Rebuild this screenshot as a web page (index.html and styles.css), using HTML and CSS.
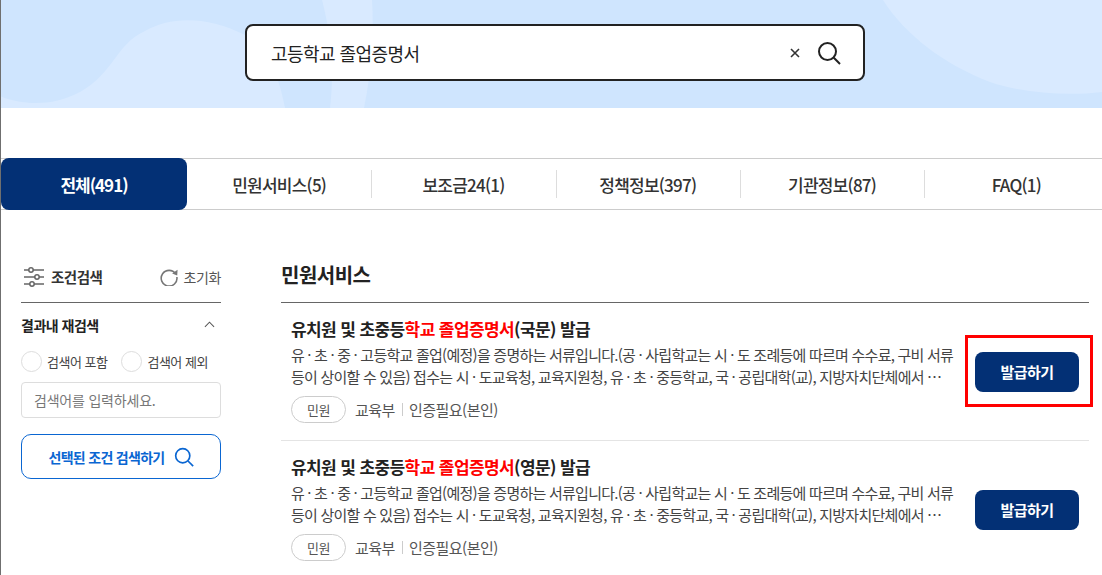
FILE: index.html
```html
<!DOCTYPE html>
<html lang="ko">
<head>
<meta charset="utf-8">
<title>검색</title>
<link rel="stylesheet" href="styles.css">
</head>
<body>
<div class="page">
  <header class="hero">
    <svg class="hero-bg" viewBox="0 0 1102 108" preserveAspectRatio="none" aria-hidden="true">
      <path class="blob" d="M0 96C20 104 50 108 80 92C115 72 115 45 145 31C170 17 205 15 245 35C265 47 278 70 285 108H0Z"/>
      <path class="blob" d="M322 0C330 30 335 70 330 108H364C372 70 374 30 372 0Z"/>
      <path class="blob" d="M883 0C905 35 945 65 990 82C1025 94 1070 96 1102 92V0Z"/>
    </svg>
    <div class="search">
      <span class="query">고등학교 졸업증명서</span>
      <svg class="clear" viewBox="0 0 10 10" aria-hidden="true"><path d="M1 1 9 9M9 1 1 9"/></svg>
      <svg class="glass" viewBox="0 0 24 24" aria-hidden="true"><circle cx="10.5" cy="10.5" r="8.5"/><path d="M16.8 16.8 23 23"/></svg>
    </div>
  </header>

  <nav class="tabs">
    <a class="tab active">전체(491)</a>
    <a class="tab">민원서비스(5)</a>
    <a class="tab">보조금24(1)</a>
    <a class="tab">정책정보(397)</a>
    <a class="tab">기관정보(87)</a>
    <a class="tab">FAQ(1)</a>
  </nav>

  <div class="content">
    <aside class="side">
      <div class="side-head">
        <svg class="sliders" viewBox="0 0 20 20" aria-hidden="true">
          <path d="M0 3H20M0 10H20M0 17H20"/>
          <circle cx="7" cy="3" r="2.2"/><circle cx="13" cy="10" r="2.2"/><circle cx="8" cy="17" r="2.2"/>
        </svg>
        <strong class="side-title">조건검색</strong>
        <span class="reset">
          <svg viewBox="0 0 16 16" aria-hidden="true"><path d="M13.9 5.2A7 7 0 1 0 15 8"/><path class="fill" d="M15.6 1.6 15.3 6.6 10.8 4.8Z"/></svg>
          초기화
        </span>
      </div>
      <div class="refine-head">
        <strong>결과내 재검색</strong>
        <svg viewBox="0 0 12 7" aria-hidden="true"><path d="M1 6 6 1 11 6"/></svg>
      </div>
      <div class="radios">
        <label class="radio"><i></i>검색어 포함</label>
        <label class="radio"><i></i>검색어 제외</label>
      </div>
      <div class="field">검색어를 입력하세요.</div>
      <button class="apply">선택된 조건 검색하기
        <svg viewBox="0 0 24 24" aria-hidden="true"><circle cx="10.5" cy="10.5" r="8.5"/><path d="M16.8 16.8 23 23"/></svg>
      </button>
    </aside>

    <main class="main">
      <h2 class="section-title">민원서비스</h2>
      <ul class="list">
        <li class="item">
          <div class="body">
            <h3 class="item-title">유치원 및 초중등<em>학교 졸업증명서</em>(국문) 발급</h3>
            <p class="desc">유 · 초 · 중 · 고등학교 졸업(예정)을 증명하는 서류입니다.(공 · 사립학교는 시 · 도 조례등에 따르며 수수료, 구비 서류<br>등이 상이할 수 있음) 접수는 시 · 도교육청, 교육지원청, 유 · 초 · 중등학교, 국 · 공립대학(교), 지방자치단체에서 …</p>
            <div class="meta"><span class="pill">민원</span><span class="org">교육부</span><span class="auth">인증필요(본인)</span></div>
          </div>
          <div class="action marked"><a class="issue">발급하기</a></div>
        </li>
        <li class="item">
          <div class="body">
            <h3 class="item-title">유치원 및 초중등<em>학교 졸업증명서</em>(영문) 발급</h3>
            <p class="desc">유 · 초 · 중 · 고등학교 졸업(예정)을 증명하는 서류입니다.(공 · 사립학교는 시 · 도 조례등에 따르며 수수료, 구비 서류<br>등이 상이할 수 있음) 접수는 시 · 도교육청, 교육지원청, 유 · 초 · 중등학교, 국 · 공립대학(교), 지방자치단체에서 …</p>
            <div class="meta"><span class="pill">민원</span><span class="org">교육부</span><span class="auth">인증필요(본인)</span></div>
          </div>
          <div class="action"><a class="issue">발급하기</a></div>
        </li>
      </ul>
    </main>
  </div>
</div>
</body>
</html>
```
FILE: styles.css
```css
* { box-sizing: border-box; }
html, body { margin: 0; height: 100%; overflow: hidden; }
body { background: #fff; color: #222; font-family: "Noto Sans CJK KR", "Noto Sans", sans-serif; letter-spacing: -0.5px; }
.page { border-left: 1px solid #6f6f6f; height: 575px; overflow: hidden; }

.hero { position: relative; height: 108px; background: #cfe5fe; display: flex; padding: 24px 0 0 244px; }
.hero-bg { position: absolute; inset: 0 0 0 -1px; width: 1102px; height: 108px; }
.blob { fill: #d9eaff; }
.search { position: relative; width: 620px; height: 57px; flex: none; background: #fff; border: 2px solid #222; border-radius: 8px; display: flex; align-items: center; padding: 0 22px 0 24px; }
.query { flex: 1; font-size: 18px; color: #222; letter-spacing: -0.55px; }
.clear { width: 10px; height: 10px; margin-right: 17px; fill: none; stroke: #333; stroke-width: 1.6; }
.glass { width: 24px; height: 24px; fill: none; stroke: #222; stroke-width: 2; }

.tabs { display: flex; margin-top: 50px; height: 52px; border-top: 1px solid #ccc; border-bottom: 1px solid #ccc; }
.tab { position: relative; flex: none; width: 184.3px; display: flex; align-items: center; justify-content: center; font-size: 17px; font-weight: 500; color: #333; letter-spacing: -0.75px; }
.tab + .tab::before { content: ""; position: absolute; left: 0; top: 11px; height: 28px; border-left: 1px solid #ddd; }
.tab.active + .tab::before { display: none; }
.tab.active { width: 186px; margin: -1px 0; background: #033075; color: #fff; font-weight: 700; border-radius: 8px; letter-spacing: -1px; }

.content { display: flex; padding: 0 13px 0 20px; }
.side { width: 200px; flex: none; margin-top: 49px; }
.side-head { display: flex; align-items: center; height: 44px; padding-bottom: 8px; border-bottom: 1px solid #666; }
.sliders { width: 20px; height: 20px; margin-left: 3px; margin-right: 7px; fill: #fff; stroke: #666; stroke-width: 1.5; }
.side-title { font-size: 14.5px; font-weight: 700; color: #333; }
.reset { margin-left: auto; display: flex; align-items: center; gap: 5px; font-size: 14px; color: #555; letter-spacing: -0.35px; }
.reset svg { width: 18px; height: 18px; fill: none; stroke: #777; stroke-width: 1.4; }
.reset .fill { fill: #777; stroke: none; }
.refine-head { display: flex; align-items: center; justify-content: space-between; padding: 10px 6px 0 0; height: 33px; }
.refine-head strong { font-size: 14px; font-weight: 700; color: #222; }
.refine-head svg { width: 11px; height: 7px; fill: none; stroke: #555; stroke-width: 1.1; }
.radios { display: flex; gap: 14px; margin-top: 15px; }
.radio { display: flex; align-items: center; gap: 5px; font-size: 13px; color: #444; letter-spacing: -0.5px; }
.radio i { width: 21px; height: 21px; border: 1px solid #ddd; border-radius: 50%; }
.field { margin-top: 10px; height: 36px; border: 1px solid #ddd; border-radius: 4px; padding: 0 12px; display: flex; align-items: center; font-size: 14px; color: #777; letter-spacing: -0.2px; }
.apply { margin-top: 16px; width: 200px; height: 45px; background: #fff; border: 1px solid #0a66d2; border-radius: 10px; color: #0a66d2; font: 700 14px "Noto Sans CJK KR", sans-serif; letter-spacing: -0.7px; display: flex; align-items: center; justify-content: center; gap: 9px; padding: 0; }
.apply svg { width: 20px; height: 20px; fill: none; stroke: #0a66d2; stroke-width: 2; }

.main { flex: 1; margin-left: 60px; min-width: 0; }
.section-title { margin: 50px 0 0; height: 43px; font-size: 20px; font-weight: 700; color: #222; line-height: 30px; border-bottom: 1px solid #666; letter-spacing: -0.5px; }
.list { list-style: none; margin: 0; padding: 0; }
.item { display: flex; align-items: center; height: 138px; border-bottom: 1px solid #e4e4e4; padding-left: 10px; }
.item:last-child { border-bottom-color: transparent; }
.item:last-child .body { margin-top: -4px; }
.body { width: 662px; flex: none; margin-top: -3px; }
.item-title { margin: 0; font-size: 17px; font-weight: 700; color: #222; line-height: 24px; letter-spacing: -0.6px; }
.item-title em { font-style: normal; color: #f00; }
.desc { margin: 3px 0 0; font-size: 15px; line-height: 22px; color: #444; letter-spacing: -0.72px; white-space: nowrap; word-spacing: -0.2px; }
.meta { display: flex; align-items: center; margin-top: 8px; font-size: 15px; color: #555; letter-spacing: -0.5px; }
.pill { width: 55px; height: 27px; border: 1px solid #ccc; border-radius: 14px; display: flex; align-items: center; justify-content: center; font-size: 13px; margin-right: 9px; }
.auth { margin-left: 7px; padding-left: 7px; position: relative; }
.auth::before { content: ""; position: absolute; left: 0; top: 4px; bottom: 4px; border-left: 1px solid #ccc; }
.action { position: relative; flex: none; margin-left: 22px; }
.issue { width: 104px; height: 40px; background: #033075; color: #fff; border-radius: 8px; display: flex; align-items: center; justify-content: center; font-size: 15px; font-weight: 700; }
.marked::after { content: ""; position: absolute; left: -10px; right: -14px; top: -17px; bottom: -15px; border: 3px solid #f00; }
```
